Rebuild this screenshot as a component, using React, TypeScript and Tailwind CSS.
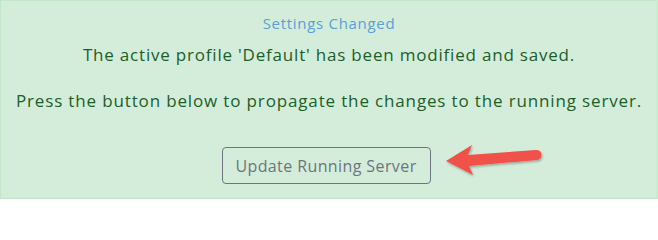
export default function App() {
  return (
    <div className="w-[658px] h-[200px] bg-white font-['Open_Sans',sans-serif]">
      <div className="h-[199px] border border-[#c3e6cb] bg-[#d4edda] flex flex-col items-center text-center">
        <div className="mt-[12px] text-[15px] leading-[20px] tracking-[0.7px] text-[#5a9fd6]">Settings Changed</div>
        <p className="mt-[10px] text-[17px] leading-[24px] tracking-[0.8px] text-[#1b5e29]">
          The active profile 'Default' has been modified and saved.
        </p>
        <p className="mt-[22px] text-[17px] leading-[24px] tracking-[0.85px] text-[#1b5e29]">
          Press the button below to propagate the changes to the running server.
        </p>
        <div className="mt-[34px] mr-[6px] relative">
          <button className="h-[37px] w-[209px] rounded-[4px] border border-[#6c757d] text-[16px] tracking-[0.4px] text-[#6c757d]">
            Update Running Server
          </button>
          <svg
            className="absolute left-[222px] top-[-7px]"
            width="100"
            height="40"
            viewBox="0 0 100 40"
          >
            <defs>
              <filter id="sh" x="-20%" y="-40%" width="140%" height="180%">
                <feDropShadow dx="1" dy="1.5" stdDeviation="1.2" floodColor="#000" floodOpacity="0.3" />
              </filter>
            </defs>
            <g filter="url(#sh)" fill="#f0514a">
              <path d="M2 21 L28 5 L24 15 L92 10 A5 5 0 0 1 93 20 L25 26 L29 35 Z" />
            </g>
          </svg>
        </div>
      </div>
    </div>
  );
}
